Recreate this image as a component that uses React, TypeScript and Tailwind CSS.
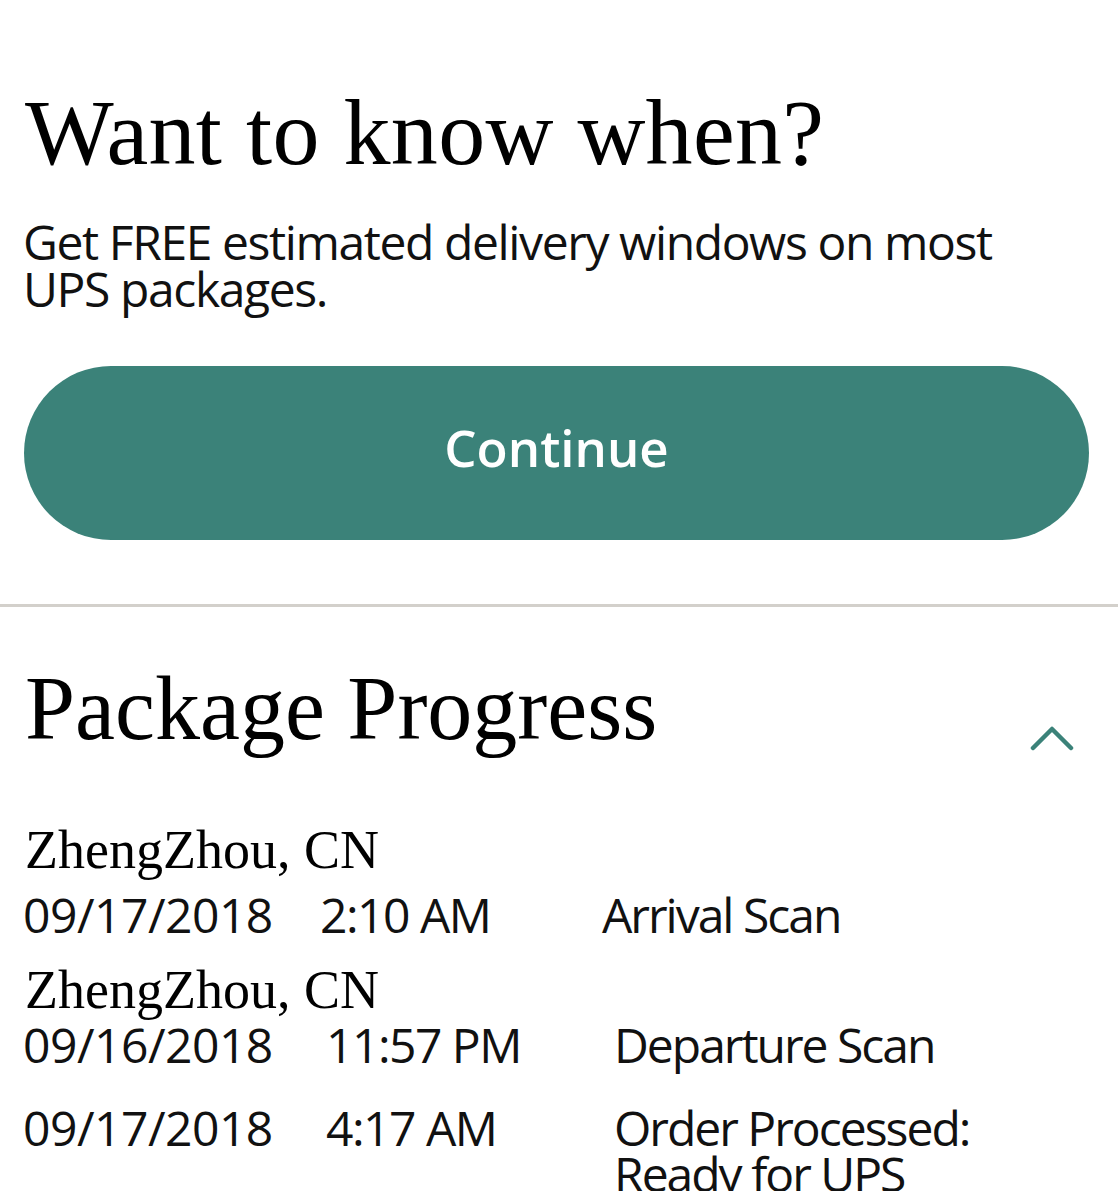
import React from "react";

const serif = { fontFamily: '"Liberation Serif", "DejaVu Serif", serif' };
const sans = { fontFamily: '"Open Sans", "Noto Sans", sans-serif' };

function Row({ date, time, event, timeCol }: { date: string; time: string; event: React.ReactNode; timeCol: string }) {
  return (
    <div className="flex text-[48px] leading-[46px] text-[#111] -ml-[2px]" style={sans}>
      <div className="w-[297px] shrink-0 tracking-[-0.5px]">{date}</div>
      <div className={timeCol + " shrink-0 tracking-[-1.5px]"}>{time}</div>
      <div className="tracking-[-2px]">{event}</div>
    </div>
  );
}

export default function App() {
  return (
    <div className="w-[1118px] h-[1191px] overflow-hidden bg-white text-black">
      <div className="px-[25px] pt-[86px]">
        <h1 className="text-[94px] leading-[92px] tracking-[0.3px] text-black" style={serif}>
          Want to know when?
        </h1>
        <p className="mt-[40px] -ml-[2px] max-w-[1010px] text-[48px] leading-[47px] tracking-[-1.4px] text-[#111]" style={sans}>
          Get FREE estimated delivery windows on most UPS packages.
        </p>
        <div className="mt-[54px] -ml-[1px] w-[1065px] h-[174px] rounded-full bg-[#3b8279] flex items-center justify-center pb-[12px]">
          <span className="text-[51px] font-semibold text-white" style={sans}>
            Continue
          </span>
        </div>
      </div>
      <div className="mt-[64px] h-[3px] bg-[#d3d0cb]" />
      <div className="px-[25px] pt-[56px]">
        <div className="flex items-start justify-between">
          <h2 className="text-[90px] leading-[92px] text-black" style={serif}>
            Package Progress
          </h2>
          <svg width="44" height="30" viewBox="0 0 44 30" className="mt-[59px] mr-[19px]">
            <path d="M3 26 L22 7 L41 26" fill="none" stroke="#3b8279" strokeWidth="4.5" strokeLinecap="round" strokeLinejoin="round" />
          </svg>
        </div>
        <div className="mt-[62px]">
          <div className="text-[54px] leading-[66px] text-black" style={serif}>ZhengZhou, CN</div>
          <div className="mt-[9px]">
            <Row date="09/17/2018" time="2:10 AM" event="Arrival Scan" timeCol="w-[282px]" />
          </div>
          <div className="mt-[19px] text-[54px] leading-[66px] text-black" style={serif}>ZhengZhou, CN</div>
          <div className="-mt-[1px]">
            <Row date="09/16/2018" time="11:57 PM" event="Departure Scan" timeCol="w-[294px] pl-[6px]" />
          </div>
          <div className="mt-[37px]">
            <Row date="09/17/2018" time="4:17 AM" event={<>Order Processed:<br />Ready for UPS</>} timeCol="w-[294px] pl-[6px]" />
          </div>
        </div>
      </div>
    </div>
  );
}
